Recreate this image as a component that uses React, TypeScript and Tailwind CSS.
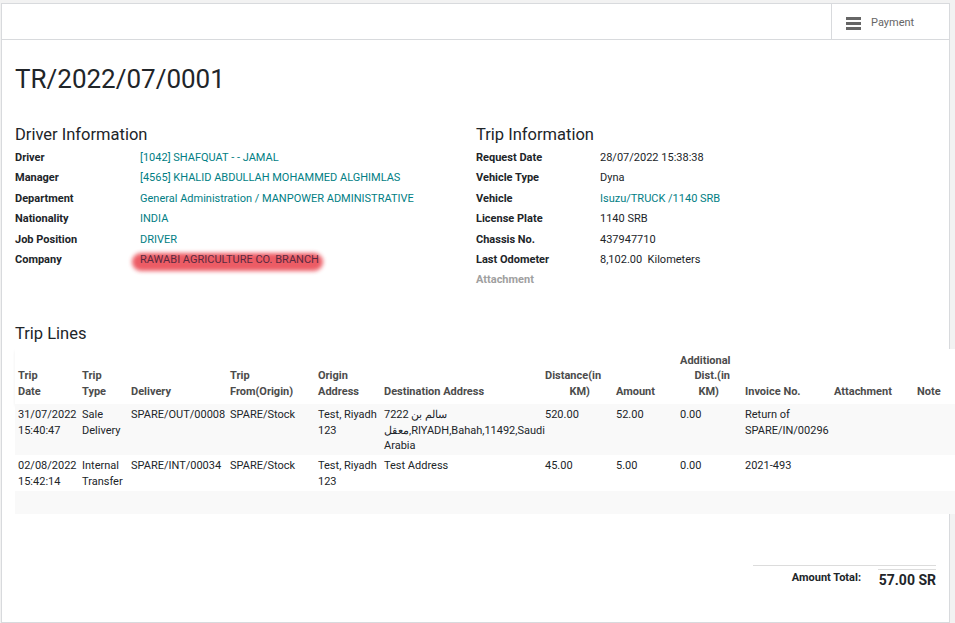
import React from "react";

const teal = "text-[#017e84]";

function InfoRow({ label, value, link, muted, labelW }: { label: string; value?: React.ReactNode; link?: boolean; muted?: boolean; labelW: string }) {
  return (
    <div className="flex h-[20.4px] items-center">
      <div className={`${labelW} shrink-0 font-bold ${muted ? "text-[#a0a0a0]" : "text-[#212529]"}`}>{label}</div>
      <div className={link ? teal : "text-[#212529]"}>{value}</div>
    </div>
  );
}

const cols = [64, 49, 99, 88, 66, 161, 71, 64, 65, 89, 83, 41];

function Hdr({ children, right }: { children: React.ReactNode; right?: boolean }) {
  return (
    <th className={`px-[3px] pt-[4px] pb-[5px] align-bottom font-bold text-[#4c4c4c] ${right ? "text-right" : "text-left"}`}>{children}</th>
  );
}

function Td({ children }: { children?: React.ReactNode }) {
  return <td className="px-[3px] pt-[3px] pb-[1.5px] align-top whitespace-nowrap text-[#212529]">{children}</td>;
}

export default function App() {
  return (
    <div className="min-h-[623px] w-[955px] bg-[#f2f2f2] pt-[3px] overflow-hidden" style={{ fontFamily: "Roboto, 'Noto Sans', sans-serif" }}>
      <div className="ml-[1px] w-[949px] min-h-[620px] border border-[#d8dadd] bg-white text-[11px]">
        {/* button box */}
        <div className="flex h-[36px] justify-end border-b border-[#d8dadd]">
          <div className="flex w-[118px] items-center gap-[10px] border-l border-[#d8dadd] pl-[14px] pt-[4px] text-[#666]">
            <div className="flex flex-col gap-[2.5px]">
              <div className="h-[2.5px] w-[15px] bg-[#666]" />
              <div className="h-[2.5px] w-[15px] bg-[#666]" />
              <div className="h-[2.5px] w-[15px] bg-[#666]" />
            </div>
            <span>Payment</span>
          </div>
        </div>

        <div className="pl-[13px]">
          <h1 className="mt-[22px] text-[26px] leading-[34px] text-[#212529]">TR/2022/07/0001</h1>

          <div className="mt-[29px] flex">
            <div className="w-[461px]">
              <h2 className="text-[16.5px] leading-[20px] text-[#212529]">Driver Information</h2>
              <div className="mt-[3px]">
                <InfoRow labelW="w-[125px]" label="Driver" value="[1042] SHAFQUAT - - JAMAL" link />
                <InfoRow labelW="w-[125px]" label="Manager" value="[4565] KHALID ABDULLAH MOHAMMED ALGHIMLAS" link />
                <InfoRow labelW="w-[125px]" label="Department" value="General Administration / MANPOWER ADMINISTRATIVE" link />
                <InfoRow labelW="w-[125px]" label="Nationality" value="INDIA" link />
                <InfoRow labelW="w-[125px]" label="Job Position" value="DRIVER" link />
                <InfoRow
                  labelW="w-[125px]"
                  label="Company"
                  link
                  value={
                    <span className="relative inline-block">
                      <span className="absolute -left-[8px] -right-[4px] top-[1px] bottom-[-3px] rounded-full bg-[#e8343f] opacity-80 blur-[2px]" />
                      <span className="relative text-[#5a2a40]">RAWABI AGRICULTURE CO. BRANCH</span>
                    </span>
                  }
                />
              </div>
            </div>
            <div className="flex-1">
              <h2 className="text-[16.5px] leading-[20px] text-[#212529]">Trip Information</h2>
              <div className="mt-[3px]">
                <InfoRow labelW="w-[124px]" label="Request Date" value="28/07/2022 15:38:38" />
                <InfoRow labelW="w-[124px]" label="Vehicle Type" value="Dyna" />
                <InfoRow labelW="w-[124px]" label="Vehicle" value="Isuzu/TRUCK /1140 SRB" link />
                <InfoRow labelW="w-[124px]" label="License Plate" value="1140 SRB" />
                <InfoRow labelW="w-[124px]" label="Chassis No." value="437947710" />
                <InfoRow labelW="w-[124px]" label="Last Odometer" value={<span>8,102.00&nbsp; Kilometers</span>} />
                <InfoRow labelW="w-[124px]" label="Attachment" muted />
              </div>
            </div>
          </div>

          <h2 className="mt-[33px] text-[16.5px] leading-[20px] text-[#212529]">Trip Lines</h2>

          <table className="mt-[5px] w-[940px] table-fixed border-collapse leading-[15.5px]">
            <colgroup>
              {cols.map((w, i) => (
                <col key={i} style={{ width: w }} />
              ))}
            </colgroup>
            <thead>
              <tr className="bg-white shadow-[0_2px_3px_rgba(0,0,0,0.07)]">
                <Hdr>Trip<br />Date</Hdr>
                <Hdr>Trip<br />Type</Hdr>
                <Hdr>Delivery</Hdr>
                <Hdr>Trip<br />From(Origin)</Hdr>
                <Hdr>Origin<br />Address</Hdr>
                <Hdr>Destination Address</Hdr>
                <Hdr>
                  <div className="w-[56px] text-right">
                    <div>Distance(in</div>
                    <div className="pr-[11px]">KM)</div>
                  </div>
                </Hdr>
                <Hdr>Amount</Hdr>
                <Hdr>
                  <div className="w-[50px] text-right">
                    <div>Additional</div>
                    <div>Dist.(in</div>
                    <div className="pr-[11px]">KM)</div>
                  </div>
                </Hdr>
                <Hdr>Invoice No.</Hdr>
                <Hdr>Attachment</Hdr>
                <Hdr>Note</Hdr>
              </tr>
            </thead>
            <tbody>
              <tr className="bg-[#f9f9f9]">
                <Td>31/07/2022<br />15:40:47</Td>
                <Td>Sale<br />Delivery</Td>
                <Td>SPARE/OUT/00008</Td>
                <Td>SPARE/Stock</Td>
                <Td>Test, Riyadh<br />123</Td>
                <Td>
                  <div>7222 سالم بن</div>
                  <div>معقل,RIYADH,Bahah,11492,Saudi</div>
                  <div>Arabia</div>
                </Td>
                <Td>520.00</Td>
                <Td>52.00</Td>
                <Td>0.00</Td>
                <Td>Return of<br />SPARE/IN/00296</Td>
                <Td />
                <Td />
              </tr>
              <tr className="bg-white">
                <Td>02/08/2022<br />15:42:14</Td>
                <Td>Internal<br />Transfer</Td>
                <Td>SPARE/INT/00034</Td>
                <Td>SPARE/Stock</Td>
                <Td>Test, Riyadh<br />123</Td>
                <Td>Test Address</Td>
                <Td>45.00</Td>
                <Td>5.00</Td>
                <Td>0.00</Td>
                <Td>2021-493</Td>
                <Td />
                <Td />
              </tr>
              <tr className="h-[23px] bg-[#f9f9f9]">
                {cols.map((_, i) => (
                  <td key={i} />
                ))}
              </tr>
            </tbody>
          </table>

          <div className="mt-[51px] flex justify-end pr-[13px]">
            <div className="w-[183px] border-t border-[#dcdcdc]">
              <div className="mt-[3px] flex items-start justify-end">
                <div className="pt-[1px] pr-[17px] leading-[15.5px] font-bold text-[#212529]">Amount Total:</div>
                <div className="w-[58px] border-t border-[#dcdcdc] pt-[1px] text-right text-[14px] leading-[18px] font-bold text-[#212529]">57.00 SR</div>
              </div>
            </div>
          </div>
        </div>
      </div>
    </div>
  );
}
